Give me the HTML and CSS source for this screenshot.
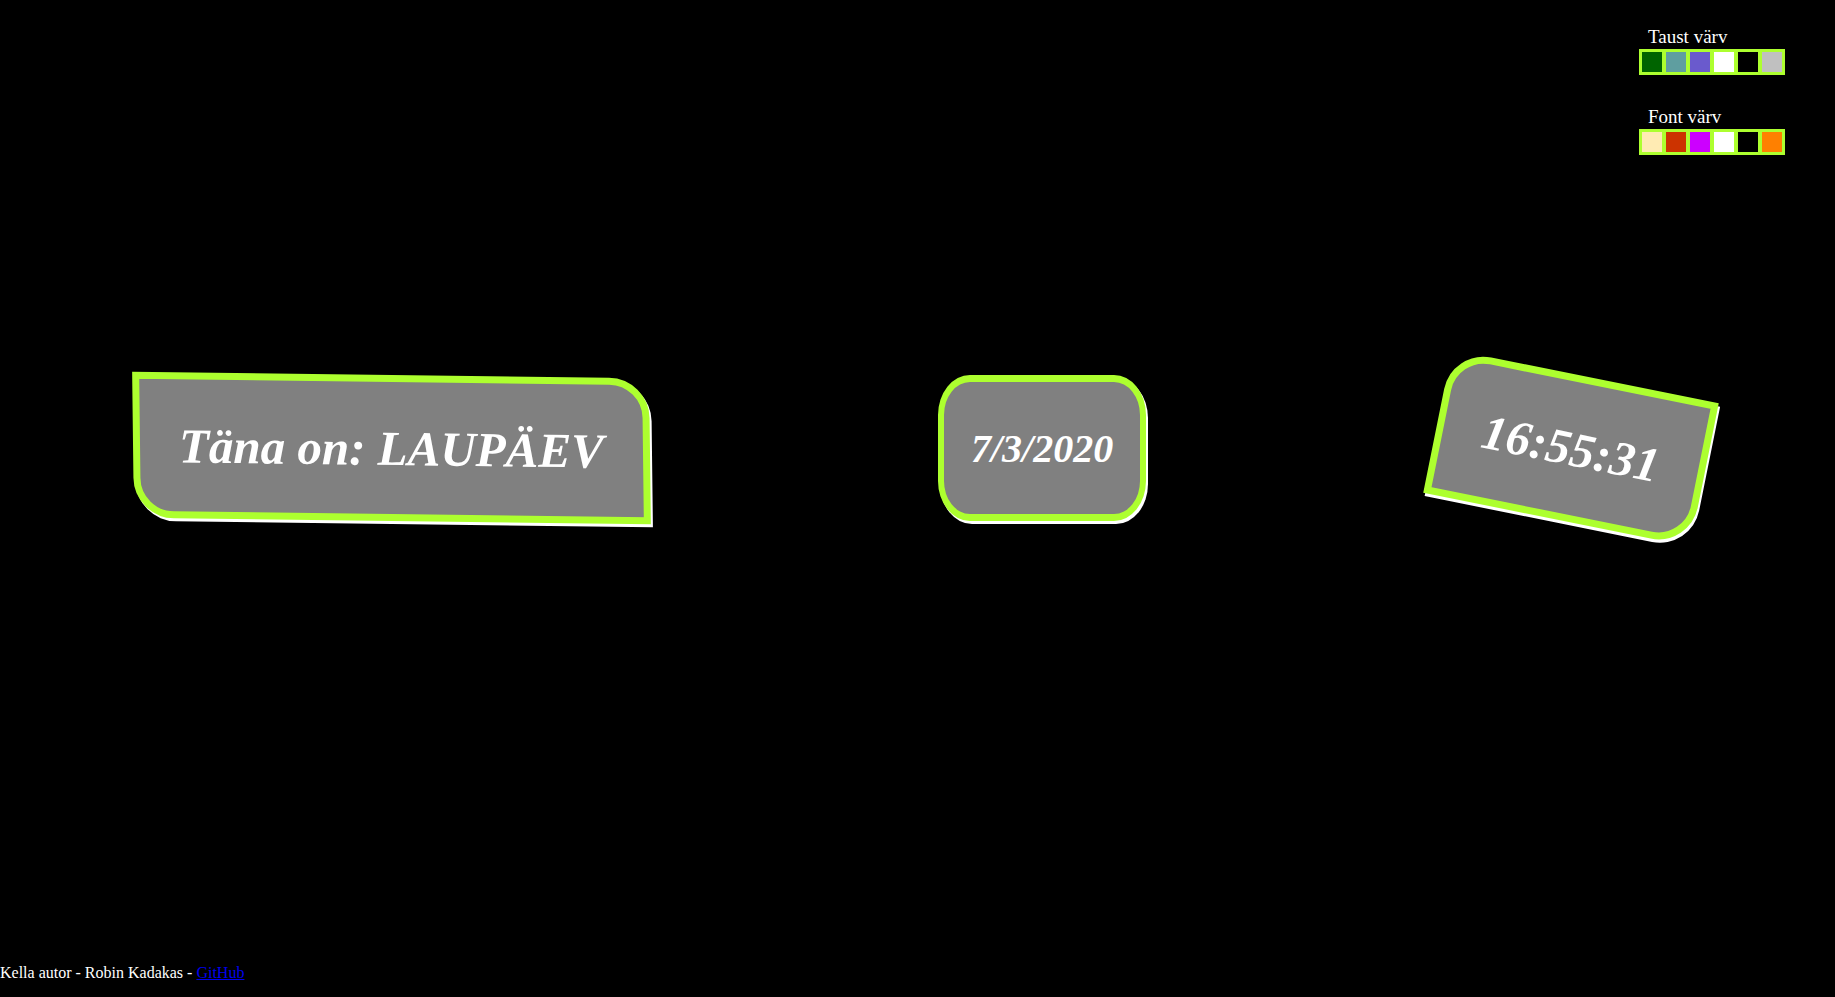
FILE: index.html
```html
<!DOCTYPE html>
<html lang="et">
<head>
<meta charset="utf-8">
<title>Kell</title>
<link rel="stylesheet" href="styles.css">
</head>
<body>
<header class="pickers">
  <section class="picker" aria-labelledby="bg-label">
    <h2 class="picker-label" id="bg-label">Taust värv</h2>
    <div class="swatches">
      <button class="swatch green" type="button" aria-label="Roheline"></button>
      <button class="swatch teal" type="button" aria-label="Sinakasroheline"></button>
      <button class="swatch violet" type="button" aria-label="Lilla"></button>
      <button class="swatch white" type="button" aria-label="Valge"></button>
      <button class="swatch black" type="button" aria-label="Must"></button>
      <button class="swatch silver" type="button" aria-label="Hall"></button>
    </div>
  </section>
  <section class="picker" aria-labelledby="font-label">
    <h2 class="picker-label" id="font-label">Font värv</h2>
    <div class="swatches">
      <button class="swatch cream" type="button" aria-label="Kreem"></button>
      <button class="swatch red" type="button" aria-label="Punane"></button>
      <button class="swatch magenta" type="button" aria-label="Magenta"></button>
      <button class="swatch white" type="button" aria-label="Valge"></button>
      <button class="swatch black" type="button" aria-label="Must"></button>
      <button class="swatch orange" type="button" aria-label="Oranž"></button>
    </div>
  </section>
</header>
<main class="clock">
  <div class="card day">Täna on: LAUPÄEV</div>
  <div class="date-slot"><div class="card date">7/3/2020</div></div>
  <div class="card time">16:55:31</div>
</main>
<footer class="footer">Kella autor - Robin Kadakas - <a class="link" href="https://github.com/">GitHub</a></footer>
</body>
</html>
```
FILE: styles.css
```css
* { box-sizing: border-box; }

body {
  margin: 0;
  min-height: 100vh;
  display: flex;
  flex-direction: column;
  background: #000;
  color: #fff;
  font-family: "Liberation Serif", "Times New Roman", serif;
}

.pickers {
  align-self: flex-end;
  display: flex;
  flex-direction: column;
  gap: 30px;
  padding: 25px 50px 0 0;
}

.picker-label {
  margin: 0;
  padding-left: 9px;
  font-size: 19px;
  font-weight: 400;
  line-height: 24px;
}

.swatches {
  display: flex;
  padding: 1px;
  background: greenyellow;
}

.swatch {
  width: 24px;
  height: 24px;
  padding: 0;
  border: 2px solid greenyellow;
}

.green { background: #006400; }
.teal { background: #5f9ea0; }
.violet { background: #6a5acd; }
.white { background: #fff; }
.black { background: #000; }
.silver { background: #c0c0c0; }
.cream { background: #ffebb3; }
.red { background: #cc3300; }
.magenta { background: #cc00ff; }
.orange { background: #ff8000; }

.clock {
  display: flex;
  justify-content: space-around;
  align-items: center;
  padding: 220px 0 0 4px;
}

.card {
  position: relative;
  padding: 48px 46px 46px;
  font-size: 49px;
  font-style: italic;
  font-weight: 700;
  line-height: 52px;
  text-align: center;
  white-space: nowrap;
}

/* The frame is a layer of its own, so it can slant without the text. */
.card::before {
  content: "";
  position: absolute;
  inset: 0;
  z-index: -1;
  border: 7px solid greenyellow;
  border-radius: 40px 0;
  background: #808080;
  box-shadow: 2px 3px #fff;
}

.day { transform: rotate(0.7deg); }

.day::before {
  border-radius: 0 40px;
  transform: skewX(1.4deg);
}

.date-slot {
  width: 270px;
  display: flex;
  justify-content: center;
}

.date {
  z-index: 0;
  padding: 48px 33px 46px;
  font-size: 40px;
}

.date::before {
  border-width: 7px 6px;
  border-radius: 32px / 40px;
}

.time { transform: rotate(11.4deg); }

.footer {
  margin-top: auto;
  padding-bottom: 14px;
  font-size: 16px;
  line-height: 20px;
}

.link { color: #0000ee; }
```
